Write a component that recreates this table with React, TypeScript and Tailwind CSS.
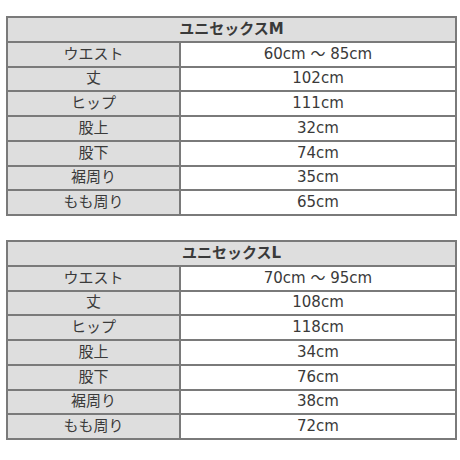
const tables = [
  {
    title: "ユニセックスM",
    rows: [
      ["ウエスト", "60cm 〜 85cm"],
      ["丈", "102cm"],
      ["ヒップ", "111cm"],
      ["股上", "32cm"],
      ["股下", "74cm"],
      ["裾周り", "35cm"],
      ["もも周り", "65cm"],
    ],
  },
  {
    title: "ユニセックスL",
    rows: [
      ["ウエスト", "70cm 〜 95cm"],
      ["丈", "108cm"],
      ["ヒップ", "118cm"],
      ["股上", "34cm"],
      ["股下", "76cm"],
      ["裾周り", "38cm"],
      ["もも周り", "72cm"],
    ],
  },
];

function SizeTable({ title, rows }: { title: string; rows: string[][] }) {
  return (
    <table className="w-[451px] border-collapse border-2 border-[#7a7a7a] text-[15px] text-[#3a3a3a]">
      <tbody>
        <tr className="h-[24.75px]">
          <th
            colSpan={2}
            className="border-2 border-[#7a7a7a] bg-[#dedede] p-0 text-center font-bold leading-none"
          >
            {title}
          </th>
        </tr>
        {rows.map(([label, value]) => (
          <tr key={label} className="h-[24.75px]">
            <td className="w-[173px] border-2 border-[#7a7a7a] bg-[#dedede] p-0 text-center leading-none">
              {label}
            </td>
            <td className="border-2 border-[#7a7a7a] bg-white p-0 text-center leading-none">
              {value}
            </td>
          </tr>
        ))}
      </tbody>
    </table>
  );
}

export default function App() {
  return (
    <div
      className="flex h-[460px] w-[460px] flex-col gap-[24px] bg-white pl-[6px] pt-[16px]"
      style={{ fontFamily: '"DejaVu Sans", "Noto Sans CJK JP", sans-serif' }}
    >
      {tables.map((t) => (
        <SizeTable key={t.title} title={t.title} rows={t.rows} />
      ))}
    </div>
  );
}
